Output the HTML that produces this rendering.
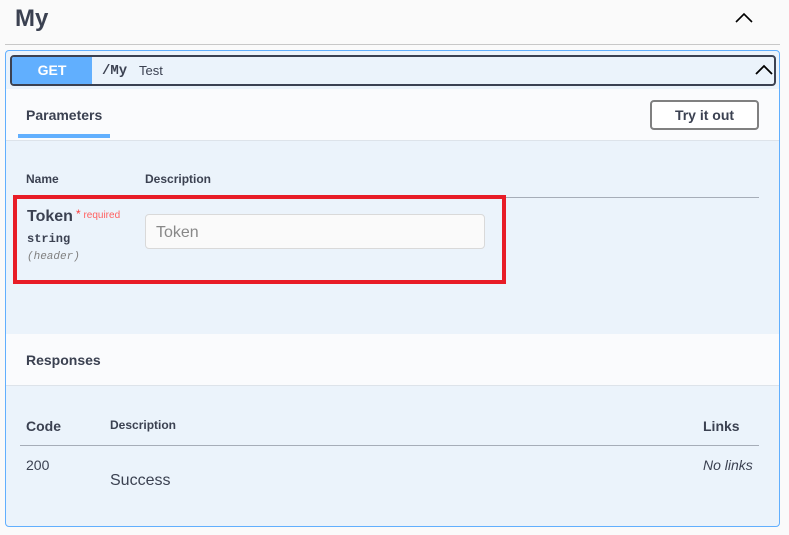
<!DOCTYPE html><html><head><style>
body{margin:0;background:#fafafa;font-family:"Liberation Sans",sans-serif;color:#3b4151;width:789px;height:535px;position:relative;overflow:hidden}
.a{position:absolute}
</style></head><body>
<div class="a" style="left:15px;top:5px;font-size:24px;font-weight:bold">My</div>
<svg class="a" style="left:734px;top:12px" width="20" height="12"><path d="M2 10 L10 2 L18 10" stroke="#000" stroke-width="1.6" fill="none"/></svg>
<div class="a" style="left:5px;top:44px;width:775px;height:1px;background:#c8c8c8"></div>
<div class="a" style="left:5px;top:50px;width:773px;height:475px;border:1px solid #61affe;border-radius:4px;background:#ebf3fb"></div>
<div class="a" style="left:10px;top:55px;width:762px;height:27px;border:2px solid #3b4151;border-radius:4px;background:#ebf3fb;overflow:hidden">
<div class="a" style="left:0;top:0;width:80px;height:27px;background:#61affe;color:#fff;font-weight:bold;font-size:14px;line-height:27px;text-align:center">GET</div>
<div class="a" style="left:90px;top:6px;font-family:'Liberation Mono',monospace;font-size:14px;font-weight:bold">/My</div>
<div class="a" style="left:127px;top:6px;font-size:13px">Test</div>
</div>
<svg class="a" style="left:754px;top:63px" width="20" height="13"><path d="M2 11 L10 3 L18 11" stroke="#000" stroke-width="1.8" fill="none"/></svg>
<div class="a" style="left:6px;top:89px;width:773px;height:51px;background:#fafbfd;border-bottom:1px solid #dde3ea"></div>
<div class="a" style="left:26px;top:107px;font-size:14px;font-weight:bold">Parameters</div>
<div class="a" style="left:18px;top:134px;width:92px;height:4px;background:#61affe"></div>
<div class="a" style="left:650px;top:100px;width:105px;height:26px;border:2px solid #808080;border-radius:4px;background:#fff;font-size:14px;font-weight:bold;text-align:center;line-height:26px">Try it out</div>
<div class="a" style="left:26px;top:172px;font-size:12px;font-weight:bold">Name</div>
<div class="a" style="left:145px;top:172px;font-size:12px;font-weight:bold">Description</div>
<div class="a" style="left:20px;top:197px;width:739px;height:1px;background:#a6adb8"></div>
<div class="a" style="left:13px;top:195px;width:485px;height:81px;border:4px solid #e81c27"></div>
<div class="a" style="left:27px;top:208px;font-size:16px;font-weight:bold">Token</div>
<div class="a" style="left:76px;top:207px;font-size:10px;color:#ff6060"><span style="color:#f93e3e;font-size:12px">*</span> required</div>
<div class="a" style="left:27px;top:232px;font-size:12px;font-family:'Liberation Mono',monospace;font-weight:bold">string</div>
<div class="a" style="left:27px;top:251px;font-size:11px;font-family:'Liberation Mono',monospace;font-style:italic;color:#808080">(header)</div>
<div class="a" style="left:145px;top:214px;width:340px;height:35px;border:1px solid #d9d9d9;border-radius:4px;background:#fafafa;font-size:16px;color:#888;line-height:35px;padding-left:10px;box-sizing:border-box">Token</div>
<div class="a" style="left:6px;top:334px;width:773px;height:51px;background:#fafbfd;border-bottom:1px solid #dde3ea"></div>
<div class="a" style="left:26px;top:352px;font-size:14px;font-weight:bold">Responses</div>
<div class="a" style="left:26px;top:418px;font-size:14px;font-weight:bold">Code</div>
<div class="a" style="left:110px;top:418px;font-size:12px;font-weight:bold">Description</div>
<div class="a" style="left:703px;top:418px;font-size:14px;font-weight:bold">Links</div>
<div class="a" style="left:20px;top:445px;width:739px;height:1px;background:#a6adb8"></div>
<div class="a" style="left:26px;top:457px;font-size:14px">200</div>
<div class="a" style="left:110px;top:472px;font-size:16px">Success</div>
<div class="a" style="left:703px;top:457px;font-size:14px;font-style:italic">No links</div>
</body></html>
